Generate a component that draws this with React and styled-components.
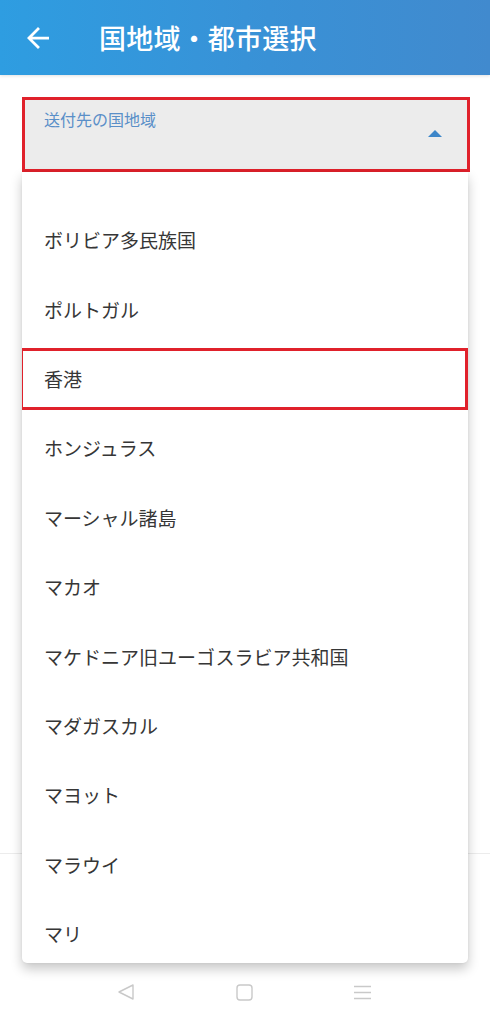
import React from "react";
import styled, { createGlobalStyle } from "styled-components";

const GlobalStyle = createGlobalStyle`
  html, body {
    margin: 0;
    padding: 0;
    background: #fff;
  }
  body {
    font-family: "Noto Sans CJK JP", "Noto Sans", sans-serif;
  }
`;

const countries = [
  "ボリビア多民族国",
  "ポルトガル",
  "香港",
  "ホンジュラス",
  "マーシャル諸島",
  "マカオ",
  "マケドニア旧ユーゴスラビア共和国",
  "マダガスカル",
  "マヨット",
  "マラウイ",
  "マリ",
];

function App() {
  return (
    <>
      <GlobalStyle />
      <Page>
        <Header>
          <BackButton aria-label="戻る">
            <svg width="22" height="22" viewBox="4 4 16 16">
              <path
                d="M20 11H7.83l5.59-5.59L12 4l-8 8 8 8 1.41-1.41L7.83 13H20v-2z"
                fill="#fff"
              />
            </svg>
          </BackButton>
          <Title>国地域・都市選択</Title>
        </Header>

        <Body>
          <SelectWrap>
            <SelectField>
              <FieldLabel>送付先の国地域</FieldLabel>
              <Caret width="14" height="7" viewBox="0 0 14 7">
                <polygon points="0,7 7,0 14,7" fill="#3d86c9" />
              </Caret>
            </SelectField>

            <Menu>
              {countries.map((name) => (
                <MenuItem key={name} $marked={name === "香港"}>
                  {name}
                </MenuItem>
              ))}
            </Menu>
          </SelectWrap>
        </Body>

        <Footer>
          <NavBar>
            <svg width="18" height="18" viewBox="0 0 18 18">
              <path
                d="M16 2 L2 9 L16 16 Z"
                fill="none"
                stroke="#c9c9c9"
                strokeWidth="1.4"
                strokeLinejoin="round"
              />
            </svg>
            <svg width="17" height="17" viewBox="0 0 17 17">
              <rect
                x="1"
                y="1"
                width="15"
                height="15"
                rx="3"
                fill="none"
                stroke="#c9c9c9"
                strokeWidth="1.4"
              />
            </svg>
            <svg width="17" height="15" viewBox="0 0 17 15">
              <path
                d="M0 1.5H17M0 7.5H17M0 13.5H17"
                stroke="#c9c9c9"
                strokeWidth="1.4"
              />
            </svg>
          </NavBar>
        </Footer>
      </Page>
    </>
  );
}

const Page = styled.div`
  width: 490px;
  height: 1024px;
  display: flex;
  flex-direction: column;
  overflow: hidden;
`;

const Header = styled.header`
  height: 75px;
  flex-shrink: 0;
  display: flex;
  align-items: center;
  background: linear-gradient(90deg, #2e9de1 0%, #3991d6 55%, #418ace 100%);
  box-shadow: 0 1px 3px rgba(0, 0, 0, 0.12);
`;

const BackButton = styled.button`
  width: 22px;
  height: 22px;
  margin-left: 27px;
  padding: 0;
  border: 0;
  background: none;
  display: flex;
  align-items: center;
  justify-content: center;
`;

const Title = styled.h1`
  margin: 0 0 0 50px;
  color: #fff;
  font-size: 27px;
  font-weight: 500;
  letter-spacing: 0.2px;
`;

const Body = styled.main`
  flex: 1;
  padding: 22px 20px 0 22px;
`;

const SelectWrap = styled.div`
  position: relative;
`;

const SelectField = styled.div`
  height: 69px;
  border: 3px solid #e0212b;
  background: #ececec;
  position: relative;
  box-sizing: content-box;
  width: 442px;
`;

const FieldLabel = styled.div`
  padding: 9px 0 0 19px;
  font-size: 16px;
  line-height: 20px;
  color: #5a8fc8;
`;

const Caret = styled.svg`
  position: absolute;
  right: 25px;
  top: 30px;
`;

const Menu = styled.ul`
  position: absolute;
  top: 75px;
  left: 0;
  width: 446px;
  height: 791px;
  margin: 0;
  padding: 33px 0 0;
  box-sizing: border-box;
  list-style: none;
  background: #fff;
  border-radius: 0 0 5px 5px;
  box-shadow: 0 6px 12px rgba(0, 0, 0, 0.22), 0 0 3px rgba(0, 0, 0, 0.06);
  overflow: hidden;
  z-index: 2;
`;

const MenuItem = styled.li`
  position: relative;
  height: 69.4px;
  display: flex;
  align-items: center;
  padding-left: 22px;
  font-size: 19px;
  color: #363636;

  ${({ $marked }) =>
    $marked &&
    `
    &::after {
      content: "";
      position: absolute;
      left: -2px;
      right: 0;
      top: 4px;
      bottom: 3px;
      border: 3px solid #e0212b;
    }
  `}
`;

const Footer = styled.footer`
  height: 170px;
  flex-shrink: 0;
  border-top: 1px solid #ececec;
  display: flex;
  flex-direction: column;
  justify-content: flex-end;
`;

const NavBar = styled.nav`
  height: 56px;
  display: flex;
  align-items: center;
  padding-left: 117px;
  gap: 101px;
  padding-bottom: 4px;
`;

export default App;
